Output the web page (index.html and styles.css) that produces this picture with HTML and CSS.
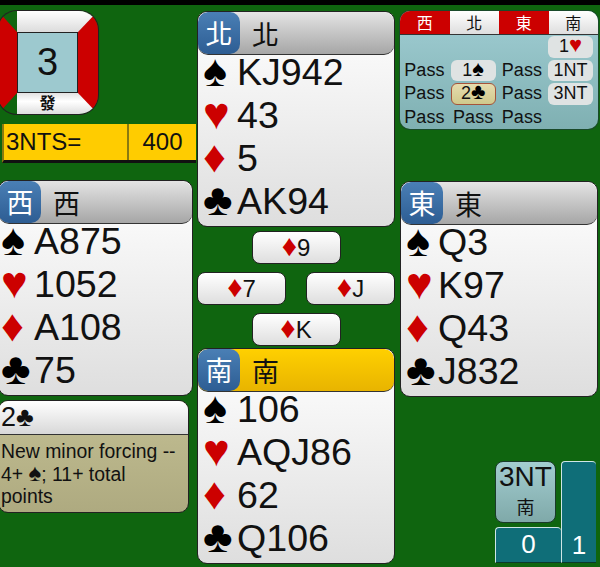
FILE: index.html
```html
<!DOCTYPE html>
<html lang="zh-Hant">
<head>
<meta charset="utf-8">
<title>Bridge</title>
<link rel="stylesheet" href="styles.css">
</head>
<body>
<div class="table">
  <div class="col col-left">
    <div class="vul"><div class="vul-center">3</div><div class="vul-dealer">發</div></div>
    <div class="score"><span class="contract">3NTS=</span><span class="points">400</span></div>
    <section class="hand hand-west">
      <header class="seat"><span class="badge">西</span><span class="name">西</span></header>
      <div class="cards">
        <div class="suit-row"><span class="pip black">♠</span>A875</div>
        <div class="suit-row"><span class="pip red">♥</span>1052</div>
        <div class="suit-row"><span class="pip red">♦</span>A108</div>
        <div class="suit-row"><span class="pip black">♣</span>75</div>
      </div>
    </section>
    <section class="explain">
      <div class="explain-head">2<span class="pip-small">♣</span></div>
      <div class="explain-body">New minor forcing -- 4+ <span class="pip-text">♠</span>; 11+ total points</div>
    </section>
  </div>

  <div class="col col-center">
    <section class="hand hand-wide">
      <header class="seat"><span class="badge">北</span><span class="name">北</span></header>
      <div class="cards">
        <div class="suit-row"><span class="pip black">♠</span>KJ942</div>
        <div class="suit-row"><span class="pip red">♥</span>43</div>
        <div class="suit-row"><span class="pip red">♦</span>5</div>
        <div class="suit-row"><span class="pip black">♣</span>AK94</div>
      </div>
    </section>
    <div class="trick">
      <div class="trick-row trick-mid"><div class="played"><span class="red">♦</span>9</div></div>
      <div class="trick-row"><div class="played"><span class="red">♦</span>7</div><div class="played"><span class="red">♦</span>J</div></div>
      <div class="trick-row trick-mid"><div class="played"><span class="red">♦</span>K</div></div>
    </div>
    <section class="hand hand-wide">
      <header class="seat seat-active"><span class="badge">南</span><span class="name">南</span></header>
      <div class="cards">
        <div class="suit-row"><span class="pip black">♠</span>106</div>
        <div class="suit-row"><span class="pip red">♥</span>AQJ86</div>
        <div class="suit-row"><span class="pip red">♦</span>62</div>
        <div class="suit-row"><span class="pip black">♣</span>Q106</div>
      </div>
    </section>
  </div>

  <div class="col col-right">
    <div class="auction">
      <div class="tabs">
        <span class="tab tab-red">西</span><span class="tab">北</span><span class="tab tab-red">東</span><span class="tab">南</span>
      </div>
      <div class="bids">
        <span></span><span></span><span></span><span class="bid">1<i class="red">♥</i></span>
        <span>Pass</span><span class="bid">1<i>♠</i></span><span>Pass</span><span class="bid">1NT</span>
        <span>Pass</span><span class="bid bid-on">2<i>♣</i></span><span>Pass</span><span class="bid">3NT</span>
        <span>Pass</span><span>Pass</span><span>Pass</span><span></span>
      </div>
    </div>
    <section class="hand hand-east">
      <header class="seat"><span class="badge">東</span><span class="name">東</span></header>
      <div class="cards">
        <div class="suit-row"><span class="pip black">♠</span>Q3</div>
        <div class="suit-row"><span class="pip red">♥</span>K97</div>
        <div class="suit-row"><span class="pip red">♦</span>Q43</div>
        <div class="suit-row"><span class="pip black">♣</span>J832</div>
      </div>
    </section>
    <div class="tally">
      <div class="final"><span class="final-bid">3NT</span><span class="final-seat">南</span></div>
      <div class="count count-ours">0</div>
      <div class="count count-theirs">1</div>
    </div>
  </div>
</div>
</body>
</html>
```
FILE: styles.css
```css
* { box-sizing: border-box; }
html, body { margin: 0; height: 567px; overflow: hidden; }
body {
  background: #0f650f;
  border-top: 5px solid #000;
  font-family: "Liberation Sans", Arial, sans-serif;
  color: #111;
}
.table {
  display: grid;
  grid-template-columns: 197px 203px 200px;
  padding-top: 6px;
}
.col { display: flex; flex-direction: column; min-width: 0; }
.col-left { margin-left: -2px; }
.col-center { width: 198px; }

/* vulnerability square */
.vul {
  position: relative;
  width: 100px;
  height: 103px;
  border-style: solid;
  border-width: 21px 20px 21px 19px;
  border-color: transparent #cc0000;
  border-radius: 19px;
  box-shadow: 0 0 0 1px #222;
  background:
    linear-gradient(#fff, #dcdcdc) top / 100% 21px no-repeat border-box,
    linear-gradient(#e2e2e2, #fff 40%, #dedede) bottom / 100% 21px no-repeat border-box;
}
.vul-center {
  height: 100%;
  background: #9dc9cf;
  border: 1px solid #222;
  font-size: 38px;
  line-height: 59px;
  text-align: center;
}
.vul-dealer {
  position: absolute;
  left: 0;
  right: 0;
  top: 60px;
  font: 700 16px/20px "Noto Sans CJK TC", sans-serif;
  text-align: center;
}

/* score strip */
.score {
  display: flex;
  width: 194px;
  height: 39px;
  margin: 10px 0 0 4px;
  background: #ffcc00;
  border-left: 2px solid #8a7a10;
  border-bottom: 3px solid #111;
  font-size: 24px;
  line-height: 35px;
}
.contract { width: 125px; padding-left: 2px; border-right: 2px solid #8a7a10; }
.points { flex: 1; text-align: center; }

/* hands */
.hand {
  width: 198px;
  height: 216px;
  border: 1px solid #222;
  border-radius: 10px;
  background: linear-gradient(#fff, #dedede);
  overflow: hidden;
}
.hand-west { width: 195px; margin-top: 17px; }
.hand-east { margin-top: 52px; }
.seat {
  display: flex;
  align-items: center;
  height: 43px;
  background: linear-gradient(#e4e4e4, #a6a6a6);
  border-bottom: 1px solid #333;
  border-radius: 10px;
}
.seat-active { background: linear-gradient(#ffd000, #e8b400); }
.badge {
  width: 42px;
  height: 100%;
  background: linear-gradient(#4a7fb5, #2d5d93);
  border-radius: 10px;
  color: #fff;
  font: 27px/41px "Noto Sans CJK TC", sans-serif;
  text-align: center;
}
.name {
  margin-left: 12px;
  font: 27px/41px "Noto Sans CJK TC", sans-serif;
}
.cards { margin-top: -4px; }
.suit-row {
  display: flex;
  align-items: center;
  height: 43px;
  font-size: 37.6px;
  color: #111;
}
.pip {
  width: 37px;
  padding: 0 0 4px 5px;
  font-size: 45px;
  line-height: 39px;
  text-align: left;
}
.hand-wide .pip { width: 39px; padding-left: 5px; }
.hand-west .pip { width: 35px; padding-left: 2px; }
.black { color: #000; }
.red { color: #cc0000; }

/* bidding explanation */
.explain {
  width: 191px;
  height: 113px;
  margin-top: 4px;
  border: 1px solid #222;
  border-radius: 10px;
  overflow: hidden;
  background: linear-gradient(#c3bf93, #aeaa80);
}
.explain-head {
  height: 34px;
  padding-left: 2px;
  background: linear-gradient(#fff, #d8d8d8);
  border-bottom: 1px solid #333;
  font-size: 27px;
  line-height: 32px;
}
.explain-body {
  padding: 5px 10px 0 2px;
  font-size: 19.4px;
  line-height: 22.5px;
}
.pip-text { font-size: 24px; line-height: 0; }

/* trick */
.trick {
  display: flex;
  flex-direction: column;
  gap: 8px;
  height: 121px;
  padding-top: 4px;
}
.trick-row { display: flex; justify-content: space-between; }
.trick-mid { justify-content: center; }
.played {
  width: 89px;
  height: 33px;
  border: 1px solid #222;
  border-radius: 8px;
  background: linear-gradient(#fff, #dedede);
  font-size: 24px;
  line-height: 31px;
  text-align: center;
}
.played .red { font-size: 30px; line-height: 0; }

/* auction */
.auction {
  width: 198px;
  height: 118px;
  border-radius: 10px;
  overflow: hidden;
  background: linear-gradient(#a0cdd3, #7fb0b2);
  box-shadow: 0 0 0 1px #1a4a2a;
}
.tabs { display: grid; grid-template-columns: repeat(4, 1fr); height: 24px; border-bottom: 1px solid #333; }
.tab {
  background: linear-gradient(#fff, #dedede);
  font: 16px/23px "Noto Sans CJK TC", sans-serif;
  text-align: center;
}
.tab-red { background: #cc0000; color: #fff; }
.bids {
  display: grid;
  grid-template-columns: repeat(4, 1fr);
  grid-auto-rows: 23.5px;
  padding: 0 3px 0 0;
  font-size: 18px;
  line-height: 23.5px;
  text-align: center;
}
.bid {
  margin: 1px 2px;
  border-radius: 6px;
  background: #dfe3e3;
  line-height: 21.5px;
}
.bid i { font-style: normal; font-size: 22px; line-height: 0; color: #000; }
.bid i.red { color: #cc0000; }
.bid-on {
  border: 1px solid #a5533a;
  background: linear-gradient(#e6dcae, #cfc98c);
  line-height: 19.5px;
}

/* trick tally */
.tally {
  display: grid;
  grid-template-columns: 66px 35px;
  grid-template-rows: 66px 36px;
  align-self: flex-end;
  margin: 64px 4px 0 0;
}
.final {
  display: flex;
  flex-direction: column;
  align-items: center;
  width: 61px;
  height: 62px;
  border: 1px solid #1a3a2a;
  border-radius: 8px;
  background: linear-gradient(#a3cdd0, #7fa9a9);
}
.final-bid { font-size: 28px; line-height: 30px; }
.final-seat { font: 18px/28px "Noto Sans CJK TC", sans-serif; }
.count {
  background: #0f6e78;
  color: #fff;
  border-top: 1px solid #cfe6e6;
  border-left: 1px solid #cfe6e6;
  border-bottom: 1px solid #0a3a2a;
  border-radius: 4px 4px 0 0;
  font-size: 26px;
  text-align: center;
}
.count-ours { grid-column: 1; grid-row: 2; line-height: 33px; }
.count-theirs { grid-column: 2; grid-row: 1 / 3; padding-top: 67px; line-height: 33px; }
```
